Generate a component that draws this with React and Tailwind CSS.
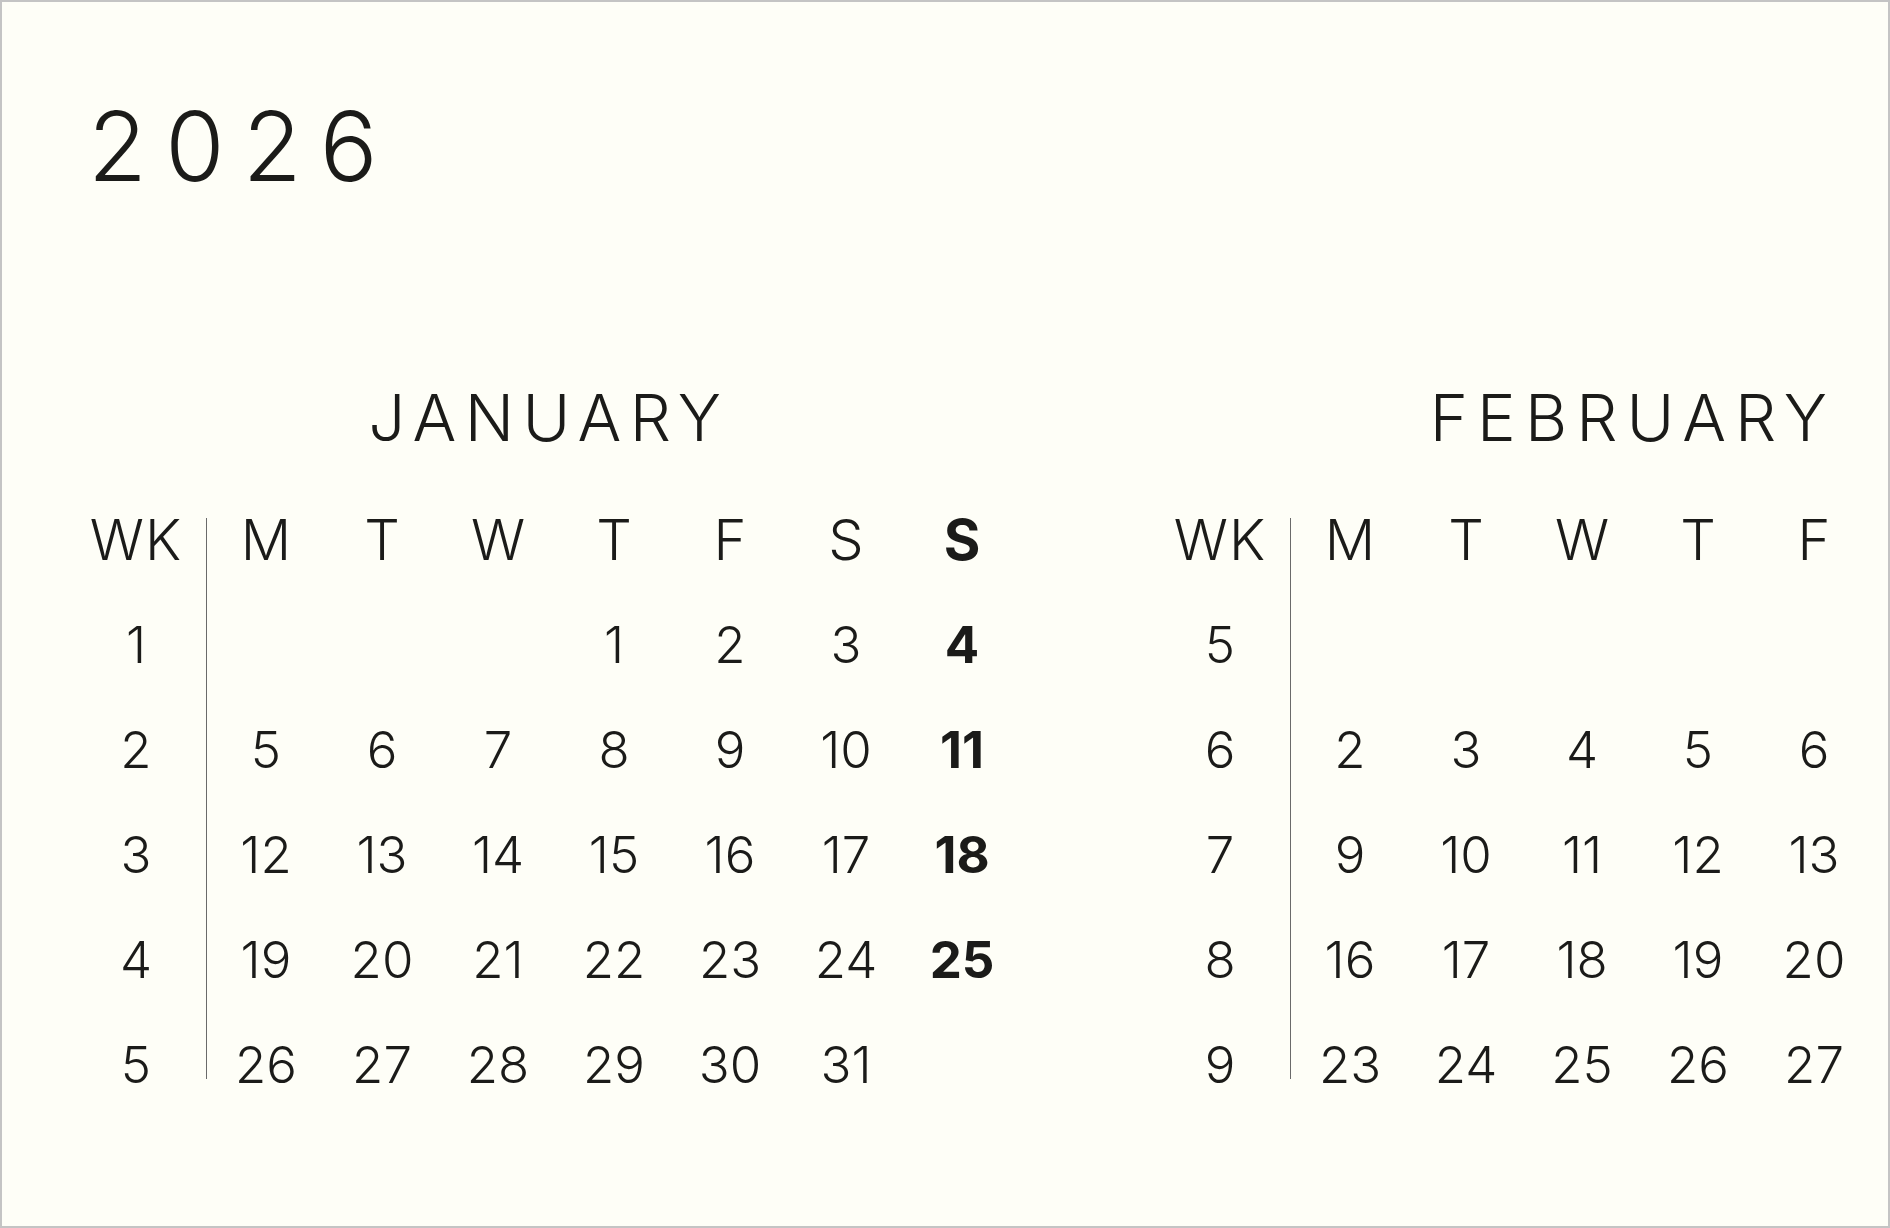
import React from "react";

const DAYS = ["M", "T", "W", "T", "F", "S", "S"];

const janWeeks = [
  { wk: 1, d: ["", "", "", "1", "2", "3", "4"] },
  { wk: 2, d: ["5", "6", "7", "8", "9", "10", "11"] },
  { wk: 3, d: ["12", "13", "14", "15", "16", "17", "18"] },
  { wk: 4, d: ["19", "20", "21", "22", "23", "24", "25"] },
  { wk: 5, d: ["26", "27", "28", "29", "30", "31", ""] },
];

// Only the weekday columns that fit on the sheet are shown for February
const febWeeks = [
  { wk: 5, d: ["", "", "", "", ""] },
  { wk: 6, d: ["2", "3", "4", "5", "6"] },
  { wk: 7, d: ["9", "10", "11", "12", "13"] },
  { wk: 8, d: ["16", "17", "18", "19", "20"] },
  { wk: 9, d: ["23", "24", "25", "26", "27"] },
];

function Month({ name, weeks, cols, tracking }) {
  const days = DAYS.slice(0, cols);
  return (
    <div className="flex-none w-[942px] flex flex-col">
      <div className="h-[65px] flex justify-center">
        <span className={"text-[65px] leading-none font-light " + tracking}>{name}</span>
      </div>
      <div className="mt-[37px] flex">
        <div className="w-[116px] flex flex-col">
          <div className="h-[105px] flex items-center justify-center text-[56px] leading-none font-light tracking-[0.02em]">
            WK
          </div>
          {weeks.map((w) => (
            <div
              key={w.wk}
              className="h-[105px] flex items-center justify-center text-[51px] leading-none font-light"
            >
              {w.wk}
            </div>
          ))}
        </div>
        <div className="ml-[12px] mr-[1px] w-px mt-[31px] mb-[38px] bg-[#6a6a6a]" />
        <div className={cols === 7 ? "grid grid-cols-[repeat(7,116px)]" : "grid grid-cols-[repeat(5,116px)]"}>
          {days.map((d, i) => (
            <div
              key={"h" + i}
              className={
                "h-[105px] flex items-center justify-center text-[56px] leading-none " +
                (i === 6 ? "font-bold" : "font-light")
              }
            >
              {d}
            </div>
          ))}
          {weeks.map((w) =>
            w.d.map((n, i) => (
              <div
                key={w.wk + "-" + i}
                className={
                  "h-[105px] flex items-center justify-center text-[51px] leading-none " +
                  (i === 6 ? "font-bold" : "font-light")
                }
              >
                {n}
              </div>
            ))
          )}
        </div>
      </div>
    </div>
  );
}

export default function App() {
  return (
    <div className="w-[1890px] h-[1228px] overflow-hidden bg-[#fefef7] border-2 border-[#c4c4c4] text-[#1b1b19] font-['Inter',sans-serif] pt-[96px] pl-[76px]">
      <div className="h-[96px] text-[96px] leading-none font-light tracking-[0.19em] ml-[10px]">
        2026
      </div>
      <div className="mt-[191px] flex gap-[142px] w-max">
        <Month name="JANUARY" weeks={janWeeks} cols={7} tracking="tracking-[0.13em]" />
        <Month name="FEBRUARY" weeks={febWeeks} cols={5} tracking="tracking-[0.14em]" />
      </div>
    </div>
  );
}
